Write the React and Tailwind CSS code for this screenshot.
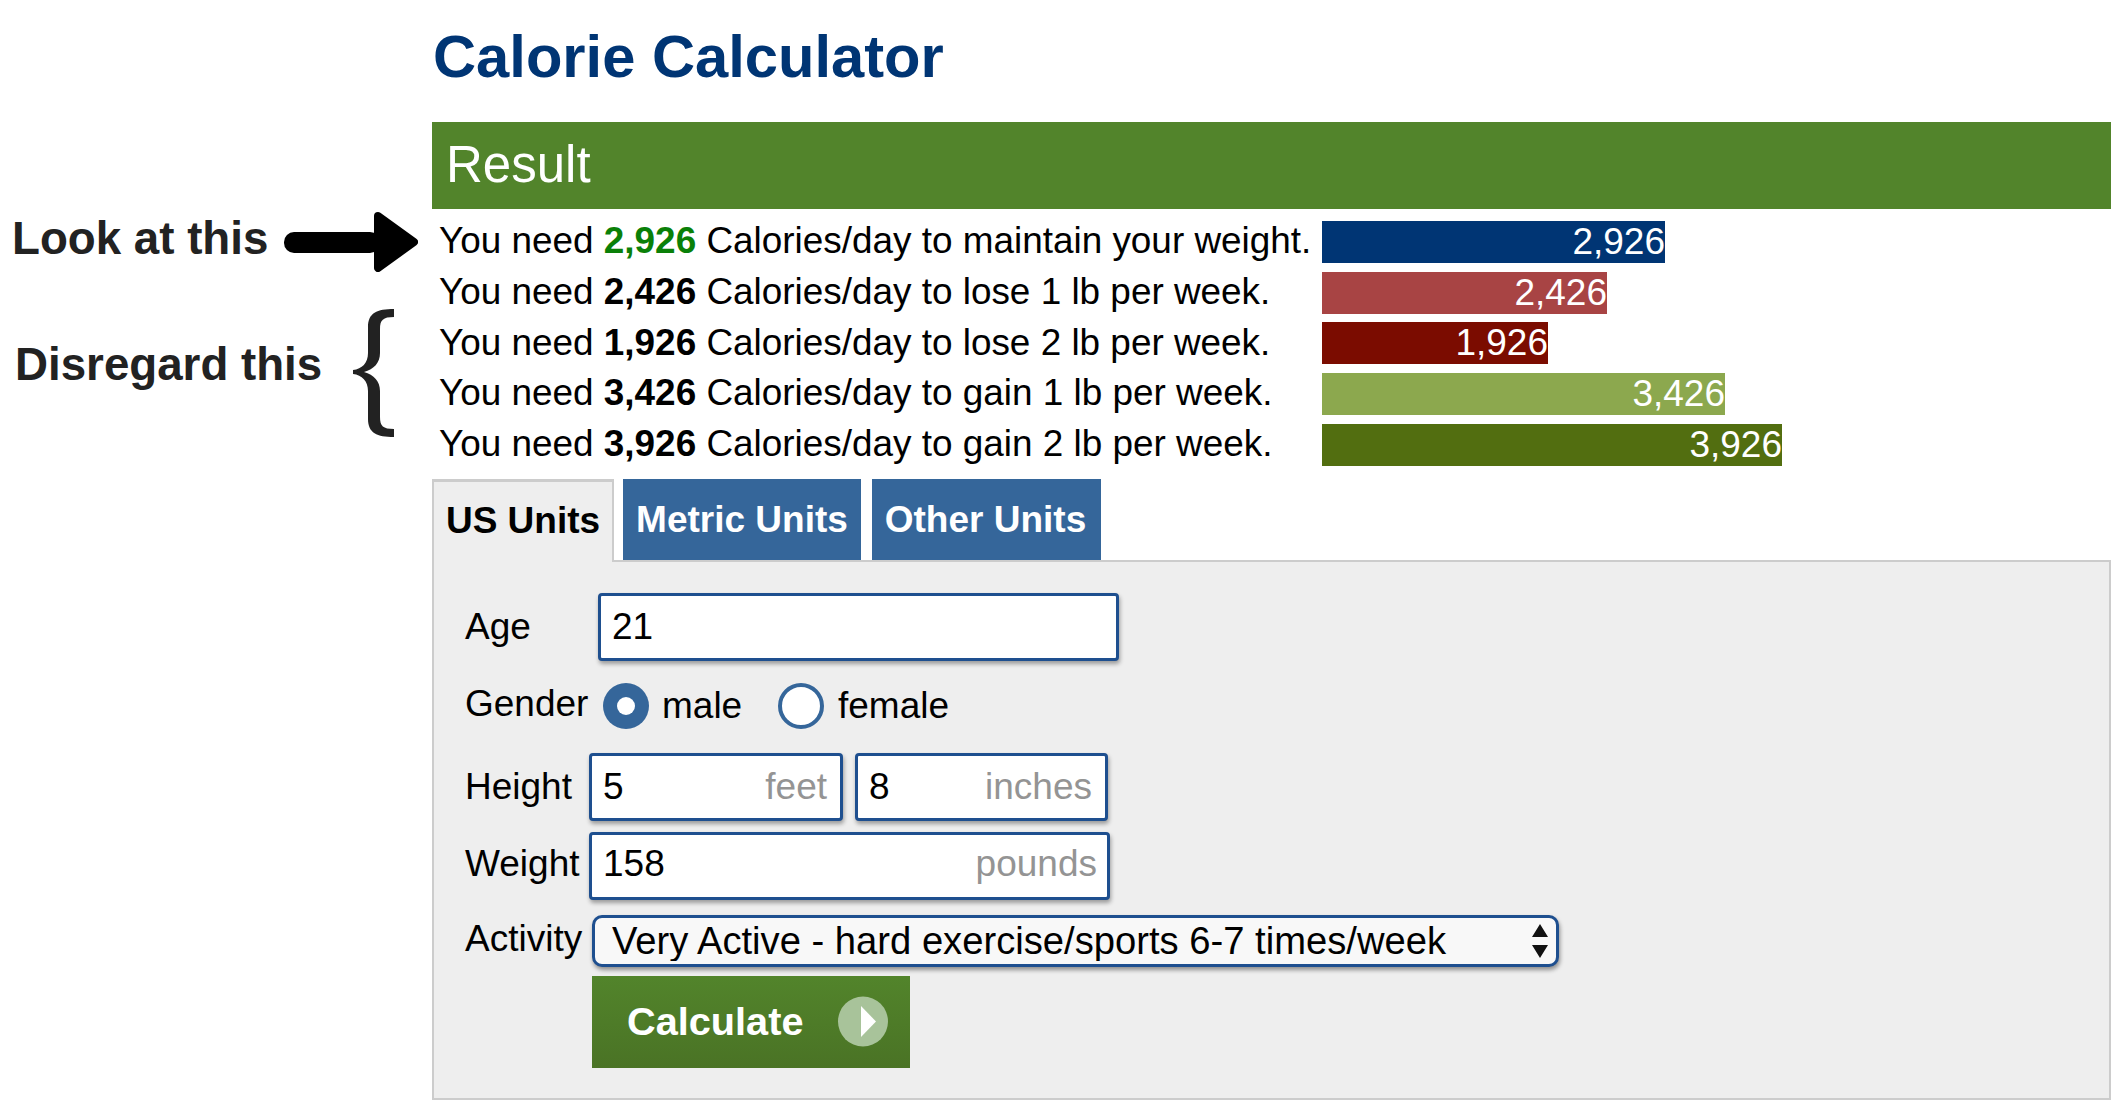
import React from 'react';

const sans = { fontFamily: '"Liberation Sans", Arial, sans-serif' };

const results = [
  { kcal: '2,926', text: 'Calories/day to maintain your weight.', width: 'w-[343px]', bar: 'bg-[#003574]', num: 'text-[#0a8008]' },
  { kcal: '2,426', text: 'Calories/day to lose 1 lb per week.', width: 'w-[285px]', bar: 'bg-[#a84444]', num: 'text-black' },
  { kcal: '1,926', text: 'Calories/day to lose 2 lb per week.', width: 'w-[226px]', bar: 'bg-[#7b0c00]', num: 'text-black' },
  { kcal: '3,426', text: 'Calories/day to gain 1 lb per week.', width: 'w-[403px]', bar: 'bg-[#8ca84e]', num: 'text-black' },
  { kcal: '3,926', text: 'Calories/day to gain 2 lb per week.', width: 'w-[460px]', bar: 'bg-[#526e10]', num: 'text-black' },
];

function ResultRow({ kcal, text, width, bar, num }) {
  return (
    <div className="flex items-center">
      <div className="w-[890px] pl-[7px] -mt-[0.5px] text-[36.9px] leading-none whitespace-nowrap text-black">
        You need <b className={num}>{kcal}</b> {text}
      </div>
      <div className={`${width} ${bar} h-[42px] flex items-center justify-end text-[37px] leading-none text-white`}>
        <span className="-mt-[1px]">{kcal}</span>
      </div>
    </div>
  );
}

// input with a grey unit sitting inside on the right
function Field({ value, unit, width, unitRight = 'right-[16px]', raised = false }) {
  return (
    <div className={`relative ${width} h-[68px] shrink-0`}>
      <input
        readOnly
        value={value}
        className={`w-full h-full bg-white border-[3px] border-[#1e4f8f] rounded-[4px] pl-[11px] text-[37px] text-black shadow-[1px_3px_4px_rgba(0,0,0,0.35)] outline-none ${raised ? 'pb-[4px]' : ''}`}
      />
      {unit && (
        <span className={`absolute ${unitRight} ${raised ? 'top-[12px]' : 'top-[14px]'} text-[37px] leading-[40px] text-[#949494]`}>
          {unit}
        </span>
      )}
    </div>
  );
}

function Radio({ checked }) {
  return (
    <span className={`w-[46px] h-[46px] shrink-0 rounded-full flex items-center justify-center ${checked ? 'bg-[#35669a]' : 'bg-white border-[4px] border-[#35669a]'}`}>
      {checked && <span className="w-[18px] h-[18px] rounded-full bg-white" />}
    </span>
  );
}

export default function App() {
  return (
    <div className="relative w-[2127px] h-[1106px] bg-white overflow-hidden" style={sans}>
      {/* annotations on the left */}
      <span className="absolute left-[12px] top-[214px] text-[45.7px] leading-[50px] font-bold text-[#222]">Look at this</span>
      <svg className="absolute left-[284px] top-[212px]" width="134" height="60" viewBox="0 0 134 60">
        <rect x="0" y="20" width="96" height="21" rx="10" fill="#000" />
        <path d="M94 4 L130 30 L94 56 Z" fill="#000" stroke="#000" strokeWidth="8" strokeLinejoin="round" />
      </svg>
      <span className="absolute left-[15px] top-[340px] text-[45.7px] leading-[50px] font-bold text-[#222]">Disregard this</span>
      <svg className="absolute left-[353px] top-[309px]" width="41" height="128" viewBox="0 0 41 128">
        <path
          d="M41 0 C24 0 15 4 15 18 L15 44 C15 54 9 60 0 61 L0 65 C9 66 15 72 15 82 L15 110 C15 124 24 128 41 128 L41 120 C30 120 27 117 27 108 L27 82 C27 72 21 66 11 63 C21 60 27 54 27 44 L27 20 C27 11 30 8 41 8 Z"
          fill="#222"
        />
      </svg>

      <div className="ml-[432px] w-[1679px]">
        <h1 className="h-[122px] pt-[27px] pl-[1px] text-[59.7px] leading-[60px] font-bold text-[#003574]">Calorie Calculator</h1>

        <div className="h-[87px] bg-[#52842b] flex items-center pl-[14px] pb-[2px] text-[51px] leading-none text-white">Result</div>

        <div className="mt-[12px] flex flex-col gap-[8.7px]">
          {results.map((r) => <ResultRow key={r.kcal} {...r} />)}
        </div>

        <div className="mt-[13px] flex items-stretch h-[81px] text-[37px] font-bold">
          <div className="w-[182px] bg-[#eeeeee] border-t-[3px] border-x-[2px] border-[#cccccc] flex items-center justify-center pb-[3px] -mb-[2px] relative text-black">US Units</div>
          <div className="ml-[9px] w-[238px] bg-[#35669a] flex items-center justify-center text-white">Metric Units</div>
          <div className="ml-[11px] w-[229px] bg-[#35669a] flex items-center justify-center pr-[2px] text-white">Other Units</div>
        </div>

        <div className="h-[540px] bg-[#eeeeee] border-2 border-[#cccccc] pl-[31px] pt-[31px] text-[37px] text-black">
          <div className="flex items-center">
            <span className="w-[133px] leading-[40px]">Age</span>
            <Field value="21" width="w-[521px]" />
          </div>

          <div className="mt-[22px] flex items-center h-[46px]">
            <span className="w-[138px] leading-[40px] -mt-[4px]">Gender</span>
            <Radio checked />
            <span className="ml-[13px] w-[116px] leading-[40px]">male</span>
            <Radio />
            <span className="ml-[14px] leading-[40px]">female</span>
          </div>

          <div className="mt-[24px] flex items-center">
            <span className="w-[124px] leading-[40px]">Height</span>
            <Field value="5" unit="feet" width="w-[254px]" />
            <div className="w-[12px] shrink-0" />
            <Field value="8" unit="inches" width="w-[253px]" />
          </div>

          <div className="mt-[11px] flex items-center">
            <span className="w-[124px] leading-[40px] -mt-[4px]">Weight</span>
            <Field value="158" unit="pounds" width="w-[521px]" unitRight="right-[13px]" raised />
          </div>

          <div className="mt-[14px] flex items-center">
            <span className="w-[127px] leading-[40px] -mt-[2px]">Activity</span>
            <div className="relative w-[967px] h-[52px] shrink-0">
              <select
                defaultValue="va"
                className="appearance-none w-full h-full bg-[#f8f8f8] border-[3px] border-[#1e4f8f] rounded-[10px] pl-[17px] text-[38.2px] leading-[40px] text-black shadow-[1px_3px_4px_rgba(0,0,0,0.4)] outline-none"
              >
                <option value="va">Very Active - hard exercise/sports 6-7 times/week</option>
              </select>
              <svg className="absolute right-[11px] top-[10px]" width="16" height="34" viewBox="0 0 16 34">
                <path d="M8 0 L16 13 L0 13 Z M0 21 L16 21 L8 34 Z" fill="#111" />
              </svg>
            </div>
          </div>

          <div className="mt-[10px] ml-[127px] w-[318px] h-[92px] bg-gradient-to-b from-[#52842b] to-[#4a7325] flex items-center text-white font-bold pl-[35px]">
            <span className="w-[211px] -mt-[1px] text-[39.7px] leading-[40px]">Calculate</span>
            <svg width="50" height="51" viewBox="0 0 50 51">
              <circle cx="25" cy="25.5" r="25" fill="#a8c39a" />
              <path d="M23 10 L38 25.5 L23 41 Z" fill="#fff" />
            </svg>
          </div>
        </div>
      </div>
    </div>
  );
}
